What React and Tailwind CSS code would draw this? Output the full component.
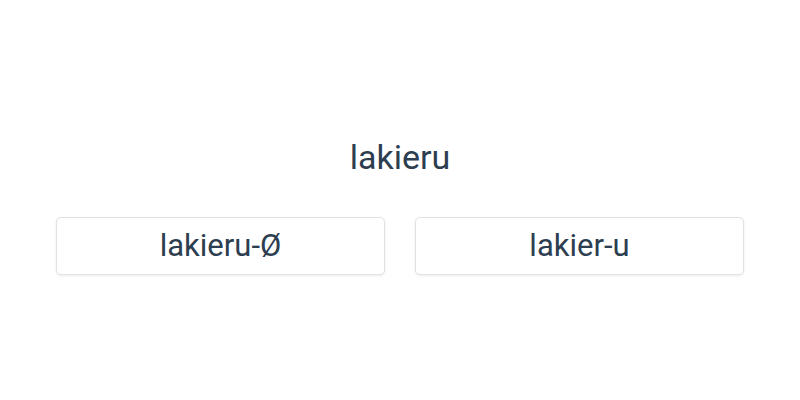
export default function App() {
  return (
    <div className="h-[400px] w-[800px] bg-white flex flex-col justify-center px-[56px] pt-[12px] text-[#2c3e50] font-['Roboto',sans-serif]">
      <h1 className="text-center text-[34px] leading-[40px] font-normal">lakieru</h1>
      <div className="mt-[40px] grid grid-cols-2 gap-[30px]">
        <button className="h-[58px] rounded-[5px] border border-[#e2e2e2] bg-white shadow-[0_1px_3px_rgba(0,0,0,0.08)] text-[31px]">
          lakieru-Ø
        </button>
        <button className="h-[58px] rounded-[5px] border border-[#e2e2e2] bg-white shadow-[0_1px_3px_rgba(0,0,0,0.08)] text-[31px]">
          lakier-u
        </button>
      </div>
    </div>
  );
}
